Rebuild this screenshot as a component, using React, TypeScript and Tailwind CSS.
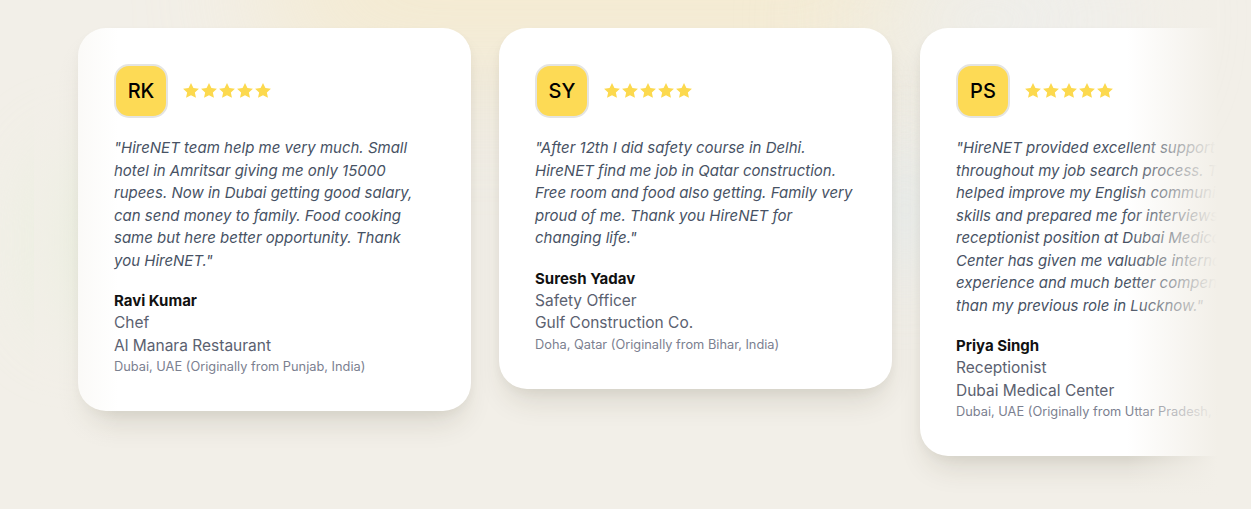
type Testimonial = {
  initials: string;
  lines: string[];
  name: string;
  role: string;
  company: string;
  location: string;
};

const testimonials: Testimonial[] = [
  {
    initials: "RK",
    lines: [
      "\"HireNET team help me very much. Small",
      "hotel in Amritsar giving me only 15000",
      "rupees. Now in Dubai getting good salary,",
      "can send money to family. Food cooking",
      "same but here better opportunity. Thank",
      "you HireNET.\"",
    ],
    name: "Ravi Kumar",
    role: "Chef",
    company: "Al Manara Restaurant",
    location: "Dubai, UAE (Originally from Punjab, India)",
  },
  {
    initials: "SY",
    lines: [
      "\"After 12th I did safety course in Delhi.",
      "HireNET find me job in Qatar construction.",
      "Free room and food also getting. Family very",
      "proud of me. Thank you HireNET for",
      "changing life.\"",
    ],
    name: "Suresh Yadav",
    role: "Safety Officer",
    company: "Gulf Construction Co.",
    location: "Doha, Qatar (Originally from Bihar, India)",
  },
  {
    initials: "PS",
    lines: [
      "\"HireNET provided excellent support",
      "throughout my job search process. They",
      "helped improve my English communication",
      "skills and prepared me for interviews. My",
      "receptionist position at Dubai Medical",
      "Center has given me valuable international",
      "experience and much better compensation",
      "than my previous role in Lucknow.\"",
    ],
    name: "Priya Singh",
    role: "Receptionist",
    company: "Dubai Medical Center",
    location: "Dubai, UAE (Originally from Uttar Pradesh, India)",
  },
];

function StarIcon() {
  return (
    <svg viewBox="0 0 20 20" className="w-[18px] h-[18px]" fill="#fcd94e">
      <path d="M10 1l2.7 5.6 6.1.8-4.5 4.2 1.2 6L10 14.6l-5.5 3 1.2-6L1.2 7.4l6.1-.8z" />
    </svg>
  );
}

function Card({ t }: { t: Testimonial }) {
  return (
    <div className="w-[393px] shrink-0 bg-white rounded-[28px] px-9 pt-9 pb-[34px] shadow-[0_18px_30px_-8px_rgba(60,50,20,0.14),0_4px_10px_rgba(60,50,20,0.04)]">
      <div className="flex items-center gap-[14px]">
        <div className="w-[54px] h-[54px] rounded-[15px] border-2 border-[#e4e4e2] bg-[#fdda55] flex items-center justify-center text-[20px] font-medium text-black">
          {t.initials}
        </div>
        <div className="flex">
          {[0, 1, 2, 3, 4].map((i) => (
            <StarIcon key={i} />
          ))}
        </div>
      </div>
      <p className="mt-[19px] text-[15px] leading-[22.5px] italic text-[#475264]">
        {t.lines.map((line, i) => (
          <span key={i} className="block whitespace-nowrap">
            {line}
          </span>
        ))}
      </p>
      <div className="mt-[18px]">
        <div className="text-[15px] leading-[22px] font-bold text-[#111111]">{t.name}</div>
        <div className="text-[15.5px] leading-[22.5px] text-[#5b6170]">{t.role}</div>
        <div className="text-[15.5px] leading-[22.5px] text-[#5b6170]">{t.company}</div>
        <div className="text-[12.8px] leading-[20px] text-[#7b8090] whitespace-nowrap">{t.location}</div>
      </div>
    </div>
  );
}

export default function App() {
  return (
    <div
      className="relative w-full h-[509px] overflow-hidden bg-[#f2efe8]"
      style={{ fontFamily: "Inter, 'Noto Sans', sans-serif" }}
    >
      <div className="absolute -top-24 left-[260px] w-[700px] h-[170px] rounded-full bg-[#f6e7bf] opacity-60 blur-3xl" />
      <div className="absolute top-[150px] left-[40px] w-[90px] h-[180px] rounded-full bg-[#e3f0d6] opacity-60 blur-2xl" />
      <div className="absolute -top-10 left-[860px] w-[260px] h-[120px] rounded-full bg-[#eceeee] opacity-80 blur-3xl" />
      <div className="absolute top-[150px] left-[860px] w-[90px] h-[120px] rounded-full bg-[#e4ecee] opacity-70 blur-2xl" />

      <div className="relative ml-[34px] w-[1183px] overflow-hidden">
        <div className="flex items-start gap-7 pl-[44px] pt-7 pb-14">
          {testimonials.map((t) => (
            <Card key={t.name} t={t} />
          ))}
        </div>
        <div className="pointer-events-none absolute inset-y-0 left-0 w-[84px] bg-gradient-to-r from-[#f2efe8]/70 to-transparent" />
        <div className="pointer-events-none absolute inset-y-0 right-0 w-[90px] bg-gradient-to-l from-[#f2efe8] to-transparent" />
      </div>
    </div>
  );
}
